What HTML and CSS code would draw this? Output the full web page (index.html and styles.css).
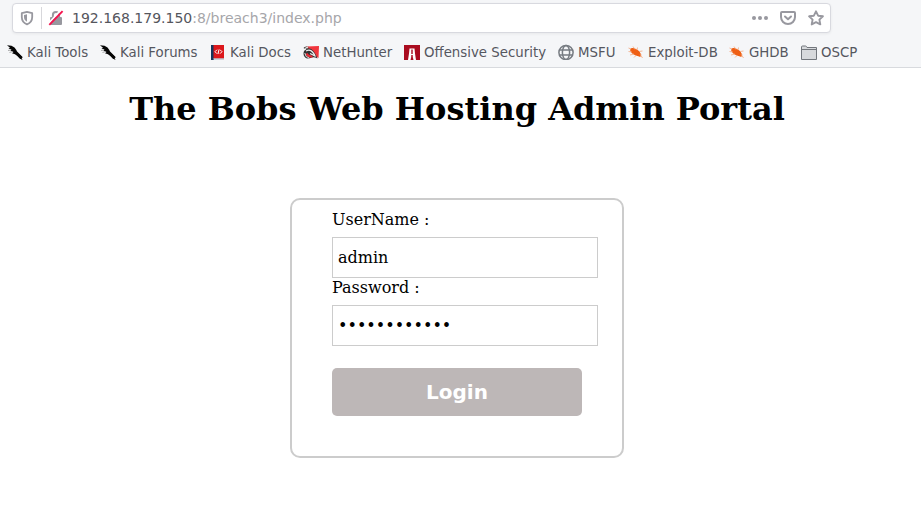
FILE: index.html
```html
<!DOCTYPE html>
<html lang="en">
<head>
<meta charset="utf-8">
<title>Admin Portal</title>
<link rel="stylesheet" href="styles.css">
</head>
<body>
<svg width="0" height="0" class="defs">
  <symbol id="dragon" viewBox="0 0 16 16">
    <path d="M0 1.200 4.500 1.800 7.500 3.500 9.500 6.200 10 8.500 13 11 15.800 13.800 14.500 13.800 15.500 16 12.800 14.500 10.500 12 8 10.200 5 9.200 6.500 8 3.500 6.500 4.500 5.500 1.500 4.500 3 3.800Z" fill="#050505"/>
    <path d="m8.500 8 6 6" stroke="#050505" stroke-width="3"/>
    <path d="M1 6.500 4 6M2.500 8.500l2.500-.8" stroke="#777" stroke-width=".6"/>
  </symbol>
  <symbol id="bug" viewBox="0 0 16 16">
    <ellipse cx="7.300" cy="8" rx="5.800" ry="3" transform="rotate(32 7.300 8)" fill="#ef5f14"/>
    <path d="m10 7 3.300 3.500-1 2.500-4-1.500Z" fill="#ef5f14"/>
    <path d="M.5 7.500 4 8M5 2.500 7 5.500M9.500 3.500 9 6M11 7.500 14.500 7M2 11 6 10M6 13.500 8.500 11M12 10 14.500 14M.5 4 3 5" stroke="#f3a77e" stroke-width=".8"/>
  </symbol>
</svg>
<header class="chrome">
  <div class="urlbar">
    <svg class="shield" width="16" height="16" viewBox="0 0 16 16"><path d="M8 1.900 13.200 3.200V7c0 3.600-1.700 6-5.200 7.300C4.500 13 2.800 10.600 2.800 7V3.200Z" fill="none" stroke="#98989f" stroke-width="1.800" stroke-linejoin="round"/><path d="M8 4.300v7.500C5.900 10.500 5 9 5 7V5.100Z" fill="#98989f"/></svg>
    <span class="divider"></span>
    <svg class="lock" width="16" height="16" viewBox="0 0 16 16"><path d="M4.900 8V5.200a3.100 3.100 0 0 1 6.200 0V8" fill="none" stroke="#98989f" stroke-width="2"/><rect x="2" y="7" width="12" height="8" rx="1" fill="#98989f"/><path d="M.5 13.500 12.500.5" stroke="#fff" stroke-width="1.800"/><path d="M1.300 14.800 14.600 1.200" stroke="#f5134e" stroke-width="1.900"/></svg>
    <span class="url"><b>192.168.179.150</b>:8/breach3/index.php</span>
    <span class="actions">
      <svg width="16" height="16" viewBox="0 0 16 16" fill="#98989f"><circle cx="2" cy="8" r="2"/><circle cx="8" cy="8" r="2"/><circle cx="14" cy="8" r="2"/></svg>
      <svg width="16" height="16" viewBox="0 0 16 16" fill="none" stroke="#98989f" stroke-width="2" stroke-linecap="round" stroke-linejoin="round"><path d="M2 2h12q1 0 1 1v4a7 7 0 0 1-14 0V3q0-1 1-1Z"/><path d="M5 6.500 8 9.300l3-2.800"/></svg>
      <svg width="16" height="16" viewBox="0 0 16 16"><path d="m8 1.300 2.100 4.400 4.800.6-3.500 3.300.9 4.800L8 12.100l-4.300 2.300.9-4.800L1.100 6.300l4.800-.6Z" fill="none" stroke="#98989f" stroke-width="1.900" stroke-linejoin="round"/></svg>
    </span>
  </div>
  <nav class="bookmarks">
    <a><svg><use href="#dragon"/></svg>Kali Tools</a>
    <a><svg><use href="#dragon"/></svg>Kali Forums</a>
    <a><svg viewBox="0 0 16 16"><path d="M1 1h3v15H1Z" fill="#17365d"/><path d="M3.500 1H14v13.500H3.500Z" fill="#dc181d"/><path d="M3 14.500h11v1H3Z" fill="#a4b0bf"/><path d="M7 5.700 5 7.700l2 2M10 5.700l2 2-2 2M9 5.500 8 10" fill="none" stroke="#fff"/></svg>Kali Docs</a>
    <a><svg viewBox="0 0 16 16"><path d="M3.500 2.500 16 2 15.500 14 12 12 6 7Z" fill="#f0363d"/><path d="M.5 4Q2 1.500 6 3L3.500 4.500Q8 3.500 10.500 7t4 7.500Q11 12.500 9 13.500t-5 1Q.5 13 .5 9.500t3-4Z" fill="#333"/><path d="M2 4.500 5 3M3 7Q7 5 9.500 8t2.500 4Q9 10.500 7 9.500" fill="none" stroke="#eee" stroke-width="1.300"/><path d="M3.500 9.500q1.500 3.500 6 3" fill="none" stroke="#e92b36" stroke-width="2"/><path d="M1.800 9q.5 4.500 4.500 5" fill="none" stroke="#ddd"/></svg>NetHunter</a>
    <a><svg viewBox="0 0 16 16"><path d="M0 1h16v15H0Z" fill="#aa0c20"/><path d="M5.500 4.500h5l.5 5 1 6.500h-2.500L8.500 12h-1L6.500 16H4l1-6.500Z" fill="#fff"/><path d="M7.300 5.500h1.400V10H7.300ZM7.300 11h1.400v1.500H7.300Z" fill="#aa0c20"/></svg>Offensive Security</a>
    <a><svg viewBox="0 0 16 16" fill="none" stroke="#777c82" stroke-width="1.500"><circle cx="8" cy="8.500" r="7.100"/><ellipse cx="8" cy="8.500" rx="3.600" ry="7.100"/><path d="M1.500 6h13M1.500 11h13"/></svg>MSFU</a>
    <a><svg><use href="#bug"/></svg>Exploit-DB</a>
    <a><svg><use href="#bug"/></svg>GHDB</a>
    <a><svg viewBox="0 0 16 16"><path d="M.5 15.500V3q0-1 1-1h3q1 0 1.500 1.500h9.500v12Z" fill="#d7d9dc" stroke="#73777d"/><path d="M.5 5.500h15" stroke="#73777d"/></svg>OSCP</a>
  </nav>
</header>
<main>
  <h1>The Bobs Web Hosting Admin Portal</h1>
  <form class="login">
    <label for="user">UserName :</label>
    <input id="user" type="text" value="admin">
    <label for="pass">Password :</label>
    <input id="pass" type="password" value="abcdefghijkl">
    <button type="button">Login</button>
  </form>
</main>
</body>
</html>
```
FILE: styles.css
```css
* { box-sizing: border-box; }
body {
  margin: 0;
  height: 505px;
  overflow: hidden;
  background: #fff;
  color: #000;
  font: 16px/19px "DejaVu Serif", serif;
}
.defs { display: none; }
.chrome {
  height: 68px;
  padding: 3px 0 0;
  background: #f5f6f8;
  border-bottom: 1px solid #d8dade;
  font-family: "DejaVu Sans", sans-serif;
}
.urlbar {
  display: flex;
  align-items: center;
  width: 819px;
  height: 30px;
  margin-left: 12px;
  padding: 0 6px;
  background: #fff;
  border: 1px solid #d8d9df;
  border-radius: 4px;
  box-shadow: 0 1px 3px rgba(0, 0, 0, .06);
}
.divider { width: 1px; height: 22px; margin: 0 6px; background: #d7d7db; }
.url { margin-left: 8px; color: #a6a6aa; font-size: 14px; white-space: nowrap; }
.url b { color: #55565d; font-weight: normal; }
.actions { display: flex; gap: 12px; margin-left: auto; }
.bookmarks {
  display: grid;
  grid-template-columns: 93px 110px 93px 101px 154px 70px 101px 72px 80px;
  height: 34px;
  margin-left: 7px;
  padding-top: 3px;
  font-size: 13.333px;
  color: #55575f;
}
.bookmarks a { display: flex; align-items: center; height: 32px; gap: 4px; white-space: nowrap; }
.bookmarks svg { width: 16px; height: 16px; flex: none; }
h1 { margin: 22px 0 0; padding-right: 7px; text-align: center; font-size: 32px; line-height: 38px; }
.login {
  display: flex;
  flex-direction: column;
  align-items: flex-start;
  width: 334px;
  height: 260px;
  margin: 70px 0 0 290px;
  padding: 10px 0 0 40px;
  border: 2px solid #ccc;
  border-radius: 10px;
}
.login input {
  width: 266px;
  height: 41px;
  margin: 8px 0 0;
  padding: 0 5px;
  border: 1px solid #ccc;
  border-radius: 0;
  background: #fff;
  color: #000;
  font: 16px "DejaVu Serif", serif;
}
.login button {
  width: 250px;
  height: 48px;
  margin: 22px 0 0;
  padding: 0;
  border: 0;
  border-radius: 5px;
  background: #bdb7b7;
  color: #fff;
  font: bold 20px "DejaVu Sans", sans-serif;
}
```
